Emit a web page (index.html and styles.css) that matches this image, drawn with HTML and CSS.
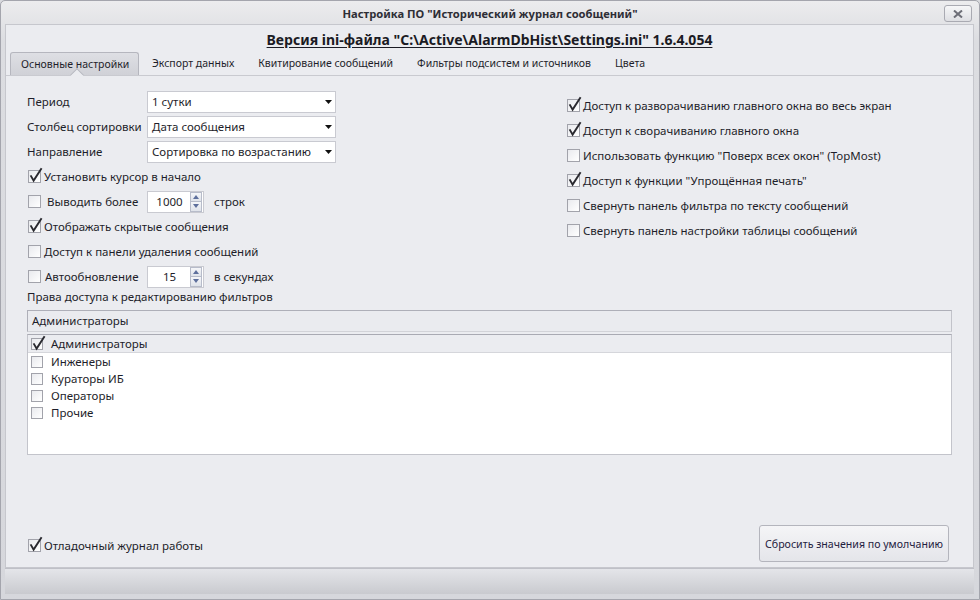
FILE: index.html
```html
<!DOCTYPE html>
<html lang="ru">
<head>
<meta charset="utf-8">
<title>Настройка ПО</title>
<link rel="stylesheet" href="styles.css">
</head>
<body>
<svg class="defs" width="0" height="0" aria-hidden="true">
  <defs>
    <symbol id="check" viewBox="0 0 16 16">
      <path d="M2.6 8.4 L5.6 13.6 L13.6 1.2" fill="none" stroke="#2a2a30" stroke-width="1.9" stroke-linejoin="miter"/>
    </symbol>
    <symbol id="down" viewBox="0 0 7 4"><path d="M0 0 H7 L3.5 4 Z" fill="#111"/></symbol>
    <symbol id="sup" viewBox="0 0 6 4"><path d="M0 4 H6 L3 0 Z" fill="#5d6f9c"/></symbol>
    <symbol id="sdn" viewBox="0 0 6 4"><path d="M0 0 H6 L3 4 Z" fill="#5d6f9c"/></symbol>
  </defs>
</svg>
<div class="window">
  <div class="titlebar">
    <div class="title">Настройка ПО "Исторический журнал сообщений"</div>
    <div class="close"><svg width="10" height="8" viewBox="0 0 10 8"><path d="M1 0.5 L9 7.5 M9 0.5 L1 7.5" stroke="#6d6e77" stroke-width="2"/></svg></div>
  </div>
  <div class="client">
    <div class="header"><span>Версия ini-файла "C:\Active\AlarmDbHist\Settings.ini" 1.6.4.054</span></div>
    <div class="tabs">
      <div class="tab active">Основные настройки</div>
      <div class="tab">Экспорт данных</div>
      <div class="tab">Квитирование сообщений</div>
      <div class="tab">Фильтры подсистем и источников</div>
      <div class="tab">Цвета</div>
    </div>
    <div class="page">
      <div class="top">
        <div class="col-left">
          <div class="row">
            <span class="lbl">Период</span>
            <div class="combo"><span>1 сутки</span><svg class="arr" width="7" height="4"><use href="#down"/></svg></div>
          </div>
          <div class="row">
            <span class="lbl">Столбец сортировки</span>
            <div class="combo"><span>Дата сообщения</span><svg class="arr" width="7" height="4"><use href="#down"/></svg></div>
          </div>
          <div class="row">
            <span class="lbl">Направление</span>
            <div class="combo"><span>Сортировка по возрастанию</span><svg class="arr" width="7" height="4"><use href="#down"/></svg></div>
          </div>
          <div class="row">
            <span class="cb on"><svg width="16" height="16"><use href="#check"/></svg></span>
            <span class="ctext">Установить курсор в начало</span>
          </div>
          <div class="row">
            <span class="cb"></span>
            <span class="lbl2">Выводить более</span>
            <div class="spin"><span class="val">1000</span><div class="btns"><span class="sb"><svg width="6" height="4"><use href="#sup"/></svg></span><span class="sb"><svg width="6" height="4"><use href="#sdn"/></svg></span></div></div>
            <span class="after">строк</span>
          </div>
          <div class="row">
            <span class="cb on"><svg width="16" height="16"><use href="#check"/></svg></span>
            <span class="ctext">Отображать скрытые сообщения</span>
          </div>
          <div class="row">
            <span class="cb"></span>
            <span class="ctext">Доступ к панели удаления сообщений</span>
          </div>
          <div class="row">
            <span class="cb"></span>
            <span class="lbl3">Автообновление</span>
            <div class="spin"><span class="val">15</span><div class="btns"><span class="sb"><svg width="6" height="4"><use href="#sup"/></svg></span><span class="sb"><svg width="6" height="4"><use href="#sdn"/></svg></span></div></div>
            <span class="after">в секундах</span>
          </div>
        </div>
        <div class="col-right">
          <div class="row"><span class="cb on"><svg width="16" height="16"><use href="#check"/></svg></span><span class="ctext">Доступ к разворачиванию главного окна во весь экран</span></div>
          <div class="row"><span class="cb on"><svg width="16" height="16"><use href="#check"/></svg></span><span class="ctext">Доступ к сворачиванию главного окна</span></div>
          <div class="row"><span class="cb"></span><span class="ctext">Использовать функцию "Поверх всех окон" (TopMost)</span></div>
          <div class="row"><span class="cb on"><svg width="16" height="16"><use href="#check"/></svg></span><span class="ctext">Доступ к функции "Упрощённая печать"</span></div>
          <div class="row"><span class="cb"></span><span class="ctext">Свернуть панель фильтра по тексту сообщений</span></div>
          <div class="row"><span class="cb"></span><span class="ctext">Свернуть панель настройки таблицы сообщений</span></div>
        </div>
      </div>
      <div class="section-label">Права доступа к редактированию фильтров</div>
      <div class="group-head">Администраторы</div>
      <div class="list">
        <div class="item sel"><span class="cb on"><svg width="16" height="16"><use href="#check"/></svg></span><span class="itext">Администраторы</span></div>
        <div class="item"><span class="cb"></span><span class="itext">Инженеры</span></div>
        <div class="item"><span class="cb"></span><span class="itext">Кураторы ИБ</span></div>
        <div class="item"><span class="cb"></span><span class="itext">Операторы</span></div>
        <div class="item"><span class="cb"></span><span class="itext">Прочие</span></div>
      </div>
      <div class="bottom">
        <div class="row">
          <span class="cb on"><svg width="16" height="16"><use href="#check"/></svg></span>
          <span class="ctext">Отладочный журнал работы</span>
        </div>
        <div class="button">Сбросить значения по умолчанию</div>
      </div>
    </div>
  </div>
  <div class="footer"></div>
</div>
</body>
</html>
```

FILE: styles.css
```css
* { box-sizing: border-box; }
html, body { margin: 0; padding: 0; }
body {
  width: 980px;
  height: 600px;
  overflow: hidden;
  font-family: "Noto Sans", "Open Sans", sans-serif;
  font-size: 11.5px;
  color: #1e1e2a;
  background: #d9dade;
}
.defs { position: absolute; width: 0; height: 0; overflow: hidden; }

.window {
  width: 980px;
  height: 600px;
  display: flex;
  flex-direction: column;
  border: 1px solid #a4a5ad;
  border-radius: 5px 5px 0 0;
  background: linear-gradient(#ececee, #dcdde1 40px, #d6d7dc);
}

.titlebar {
  height: 23px;
  display: flex;
  align-items: center;
  justify-content: center;
  position: relative;
}
.title {
  font-weight: 700;
  font-size: 11.2px;
  color: #2e2e36;
  margin-top: 2px;
}
.close {
  position: absolute;
  right: 7px;
  top: 4px;
  width: 28px;
  height: 17px;
  border: 1px solid #a9aab2;
  border-radius: 3px;
  background: linear-gradient(#f6f6f8, #dedfe3);
  display: flex;
  align-items: center;
  justify-content: center;
}

.client {
  flex: 1;
  margin: 0 5px 0 4px;
  background: #ebecf0;
  border: 1px solid #c6c7cd;
  display: flex;
  flex-direction: column;
}

.header {
  height: 27px;
  text-align: center;
  padding-top: 5px;
  line-height: 20px;
}
.header span {
  font-weight: 700;
  font-size: 14px;
  color: #1b1b24;
  text-decoration: underline;
  text-underline-offset: 2px;
}

.tabs {
  height: 24px;
  display: flex;
  align-items: flex-end;
  padding-left: 4px;
  border-bottom: 1px solid #c9cad0;
  font-size: 10.5px;
}
.tab {
  height: 23px;
  padding: 0 12px;
  line-height: 22px;
  color: #1e1e2a;
  white-space: nowrap;
}
.tab.active {
  position: relative;
  width: 129px;
  padding: 0 10px;
  border: 1px solid #b5b6be;
  border-bottom: none;
  border-radius: 3px 3px 0 0;
  background: linear-gradient(#dedfe4, #d0d1d7);
  margin-right: 1px;
}
.tab.active::after {
  content: "";
  position: absolute;
  left: 61px;
  bottom: -5px;
  width: 9px;
  height: 9px;
  background: #ebecf0;
  border-top: 1px solid #b5b6be;
  border-left: 1px solid #b5b6be;
  transform: rotate(45deg);
}

.page {
  flex: 1;
  display: flex;
  flex-direction: column;
  padding: 13px 21px 0 21px;
}

.top {
  display: grid;
  grid-template-columns: 539px 1fr;
}
.col-left, .col-right { display: flex; flex-direction: column; }
.col-right { padding-top: 4px; }
.row {
  height: 25px;
  display: flex;
  align-items: center;
  white-space: nowrap;
}
.lbl { width: 120px; }
.lbl2 { width: 106px; padding-left: 6px; }
.lbl3 { width: 106px; padding-left: 4px; }
.ctext { padding-left: 3px; }
.after { padding-left: 10px; }

.combo {
  width: 189px;
  height: 22px;
  background: #fff;
  border: 1px solid #c9cad1;
  display: flex;
  align-items: center;
  justify-content: space-between;
  padding: 0 3px 0 4px;
}

.spin {
  width: 57px;
  height: 22px;
  background: #fff;
  border: 1px solid #c9cad1;
  display: flex;
  align-items: center;
}
.spin .val { flex: 1; text-align: center; padding-left: 1px; }
.spin .btns {
  width: 12px;
  height: 20px;
  display: flex;
  flex-direction: column;
  margin-right: 1px;
}
.sb {
  flex: 1;
  border: 1px solid #b7bcca;
  background: linear-gradient(#f5f6f9, #dfe3ea);
  display: flex;
  align-items: center;
  justify-content: center;
}
.sb + .sb { border-top: none; }

.cb {
  position: relative;
  flex: none;
  width: 13px;
  height: 13px;
  margin-left: 1px;
  border: 1px solid #a2a3ab;
  background: linear-gradient(135deg, #e9eaee, #ffffff);
}
.cb svg {
  position: absolute;
  left: -1px;
  top: -4px;
}

.section-label {
  height: 16px;
  line-height: 16px;
}
.group-head {
  margin-top: 5px;
  height: 22px;
  border: 1px solid #aeafb8;
  border-bottom-color: #d2d3d8;
  border-right-color: #c2c3ca;
  background: #eaebef;
  line-height: 20px;
  padding-left: 4px;
}
.list {
  margin-top: 2px;
  height: 121px;
  background: #fff;
  border: 1px solid #c3c4cb;
  border-top-color: #a9aab3;
}
.item {
  height: 17px;
  display: flex;
  align-items: center;
  padding-left: 3px;
}
.item.sel {
  height: 18px;
  background: #ebecf0;
  border-bottom: 1px solid #d5d6db;
}
.item .cb { margin-left: 0; width: 12px; height: 12px; }
.itext { padding-left: 8px; }

.bottom {
  flex: 1;
  display: flex;
  align-items: flex-end;
  justify-content: space-between;
  padding-bottom: 5px;
  padding-right: 3px;
}
.bottom .row { height: 25px; margin-bottom: 4px; }
.button {
  width: 190px;
  height: 37px;
  border: 1px solid #b4b5bd;
  border-radius: 3px;
  background: linear-gradient(#f5f5f7, #e4e5ea);
  display: flex;
  align-items: center;
  justify-content: center;
  color: #1f2140;
  font-size: 10.6px;
}

.footer {
  height: 26px;
  margin: 0 5px 5px 4px;
  border-top: 1px solid #bfc0c7;
  background: linear-gradient(#e4e5e9, #c9cacf);
}
```
